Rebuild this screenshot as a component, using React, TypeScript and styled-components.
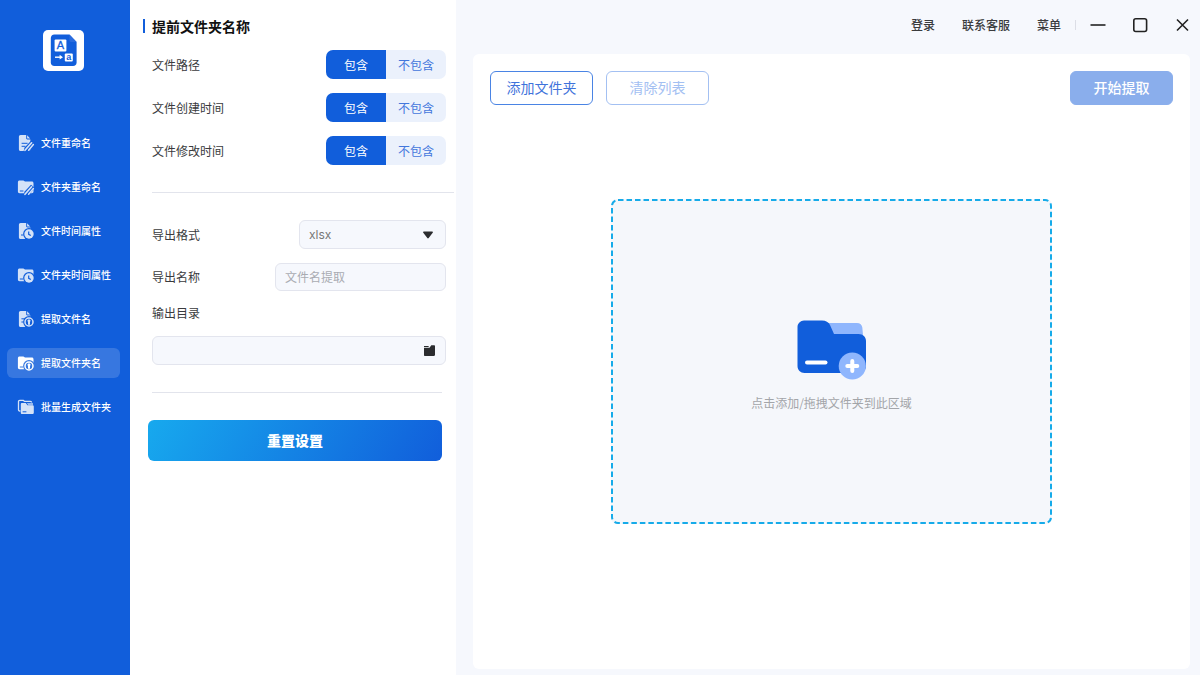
import React, { useState } from "react";
import styled, { createGlobalStyle } from "styled-components";

const blue = "#115edb";

const GlobalStyle = createGlobalStyle`
  *, *::before, *::after { box-sizing: border-box; }
  body {
    margin: 0;
    background: #f6f8fd;
    font-family: "Noto Sans CJK SC", "Noto Sans", sans-serif;
    font-size: 12px;
    line-height: 20px;
    color: #3a3b3d;
  }
  button, input, select { font: inherit; color: inherit; margin: 0; }
  button { cursor: pointer; }
`;

const Shell = styled.div`
  display: grid;
  grid-template-columns: 130px 326px minmax(0, 1fr);
  min-height: 100vh;
`;

/* ---------- sidebar ---------- */

const Sidebar = styled.aside`
  background: ${blue};
  display: flex;
  flex-direction: column;
  align-items: center;
  padding: 30px 10px 24px 7px;
`;

const Logo = styled.svg`
  width: 41px;
  height: 41px;
  display: block;
`;

const Nav = styled.nav`
  display: flex;
  flex-direction: column;
  gap: 14px;
  margin-top: 57px;
  width: 100%;
`;

const NavLink = styled.a<{ $active: boolean }>`
  display: flex;
  align-items: center;
  gap: 6px;
  height: 30px;
  padding-left: 10px;
  border-radius: 6px;
  font-size: 10px;
  font-weight: 500;
  white-space: nowrap;
  text-decoration: none;
  color: #fff;
  background: ${(p) => (p.$active ? "rgba(255, 255, 255, 0.16)" : "transparent")};

  svg {
    width: 18px;
    height: 18px;
    flex: none;
    opacity: ${(p) => (p.$active ? 1 : 0.82)};
  }
`;

/* ---------- settings panel ---------- */

const Panel = styled.section`
  background: #fff;
  padding: 16px 10px 24px 13px;
`;

const PanelTitle = styled.h1`
  display: flex;
  align-items: center;
  gap: 7px;
  margin: 0 0 14px;
  font-size: 14px;
  font-weight: 700;
  line-height: 20px;
  color: #111;

  &::before {
    content: "";
    width: 2px;
    height: 14px;
    background: ${blue};
  }
`;

const Fields = styled.div`
  display: flex;
  flex-direction: column;
  gap: 14px;
  padding-left: 9px;
`;

const Field = styled.div`
  display: flex;
  align-items: center;
  justify-content: space-between;
`;

const Divider = styled.hr<{ $end: number }>`
  height: 1px;
  border: 0;
  margin: 27px ${(p) => p.$end}px 27px 9px;
  background: #e2e4ec;
`;

const Segmented = styled.div`
  display: flex;
  width: 120px;
  height: 29px;
  border-radius: 7px;
  overflow: hidden;
  background: #ebf1fc;
`;

const Segment = styled.label`
  position: relative;
  flex: 1;
  display: flex;
  align-items: center;
  justify-content: center;
  color: #4377dc;
  cursor: pointer;

  &:has(input:checked) {
    background: ${blue};
    color: #fff;
  }

  input {
    position: absolute;
    inset: 0;
    opacity: 0;
  }
`;

const ControlBox = styled.div<{ $width?: number; $height: number }>`
  display: flex;
  align-items: center;
  width: ${(p) => (p.$width ? p.$width + "px" : "100%")};
  height: ${(p) => p.$height}px;
  border: 1px solid #e3e5ee;
  border-radius: 6px;
  background: #f6f8fd;
`;

const TextInput = styled.input`
  flex: 1;
  min-width: 0;
  height: 100%;
  padding: 0 9px 2px;
  border: 0;
  outline: 0;
  background: transparent;
  &::placeholder { color: #a9abb2; opacity: 1; }
`;

const SelectWrap = styled(ControlBox)`
  position: relative;
  svg {
    position: absolute;
    right: 12px;
    pointer-events: none;
  }
`;

const Select = styled.select`
  appearance: none;
  width: 100%;
  height: 100%;
  padding: 0 30px 0 9px;
  border: 0;
  outline: 0;
  background: transparent;
  color: #777;
  font-family: Inter, "Noto Sans CJK SC", sans-serif;
`;

const DirLabel = styled.label`
  display: block;
  padding: 12px 0 13px 9px;
`;

const DirRow = styled.div`
  padding-left: 9px;
`;

const BrowseButton = styled.button`
  display: flex;
  padding: 0;
  margin-right: 10px;
  border: 0;
  background: none;
`;

const ResetButton = styled.button`
  display: block;
  width: 294px;
  height: 41px;
  margin-left: 5px;
  padding: 0 0 2px;
  border: 0;
  border-radius: 6px;
  background: linear-gradient(120deg, #17a9ee, ${blue});
  color: #fff;
  font-size: 14px;
  font-weight: 900;
`;

/* ---------- main area ---------- */

const Main = styled.main`
  display: flex;
  flex-direction: column;
  padding: 0 10px 6px 17px;
`;

const TopBar = styled.header`
  display: flex;
  align-items: center;
  justify-content: flex-end;
  height: 50px;
  margin-bottom: 4px;
`;

const TopLinks = styled.nav`
  display: flex;
  gap: 27px;
  a {
    color: inherit;
    font-weight: 500;
    text-decoration: none;
  }
`;

const TopRule = styled.span`
  width: 1px;
  height: 10px;
  margin: 0 14px;
  background: #dcdee6;
`;

const WindowButtons = styled.div`
  display: flex;
  gap: 26px;
`;

const WindowButton = styled.button`
  display: flex;
  padding: 0;
  border: 0;
  background: none;
  svg { width: 16px; height: 16px; }
`;

const Card = styled.div`
  flex: 1;
  display: flex;
  flex-direction: column;
  padding: 17px;
  border-radius: 6px;
  background: #fff;
`;

const Toolbar = styled.div`
  display: flex;
  gap: 13px;
`;

const ToolButton = styled.button<{ $kind: "outline" | "muted" | "solid" }>`
  width: 103px;
  height: 34px;
  padding: 0 0 2px;
  border-radius: 6px;
  font-size: 14px;
  border: 1px solid
    ${(p) => ({ outline: "#4a84e4", muted: "#a3c0f2", solid: "#8aaeec" })[p.$kind]};
  background: ${(p) => (p.$kind === "solid" ? "#8aaeec" : "#fff")};
  color: ${(p) => ({ outline: "#3f73db", muted: "#a3c0f2", solid: "#fff" })[p.$kind]};
  font-weight: ${(p) => (p.$kind === "solid" ? 500 : 400)};
  margin-left: ${(p) => (p.$kind === "solid" ? "auto" : "0")};
`;

const DropZone = styled.button`
  position: relative;
  display: flex;
  flex-direction: column;
  align-items: center;
  justify-content: center;
  gap: 13px;
  align-self: center;
  width: 100%;
  max-width: 441px;
  height: 325px;
  margin-top: 94px;
  padding: 16px 0 6px;
  border: 0;
  border-radius: 6px;
  background: #f5f7fb;
  color: #a3a5a9;
`;

const DashedFrame = styled.svg`
  position: absolute;
  inset: 0;
  width: 100%;
  height: 100%;
  overflow: visible;

  rect {
    x: 1px;
    y: 1px;
    width: calc(100% - 2px);
    height: calc(100% - 2px);
    fill: none;
    stroke: #16abe9;
    stroke-width: 2px;
    stroke-dasharray: 5.5 3;
  }
`;

/* ---------- drawings ---------- */

const Clock = () => (
  <>
    <circle cx="12" cy="12" r="5.9" fill={blue} />
    <circle cx="12" cy="12" r="4.7" fill="#fff" />
    <path d="M11.7 9.4V12.3L13.8 13.5" fill="none" stroke={blue} strokeWidth="1.2" />
  </>
);

const Extract = ({ bg }: { bg: string }) => (
  <>
    <circle cx="12" cy="12" r="5.9" fill={bg} />
    <circle cx="12" cy="12" r="4" fill="none" stroke="#fff" strokeWidth="1.5" />
    <path d="M12 9L14.2 11.2H13V14.8H11V11.2H9.8Z" fill="#fff" />
  </>
);

const FileBody = () => (
  <>
    <path
      d="M3.6 1H9.2V4.2C9.2 4.9 9.6 5.4 10.3 5.4H13.4V15.2C13.4 16.2 12.7 17 11.7 17H3.6C2.6 17 1.9 16.2 1.9 15.2V2.8C1.9 1.8 2.6 1 3.600 1Z"
      fill="#fff"
    />
    <path d="M10.1 1.2L13.2 4.5H10.7C10.3 4.5 10.1 4.300 10.1 3.9Z" fill="#fff" />
  </>
);

const FolderBody = () => (
  <path
    d="M0.900 4.3C0.900 3.3 1.600 2.600 2.600 2.600H6.400L8 3.600H14.800C15.800 3.600 16.500 4.300 16.500 5.200V13.600C16.500 14.600 15.800 15.300 14.800 15.300H2.600C1.600 15.300 0.900 14.600 0.900 13.600Z"
    fill="#fff"
  />
);

const Pencil = () => (
  <>
    <path d="M6.600 17.400L7.400 13.800L14 6.800L17.600 9.800L12 17.400Z" fill={blue} />
    <path d="M8 16.300L14.600 8.800" stroke="#fff" strokeWidth="1.700" strokeLinecap="round" />
    <path d="M11.600 16.200L16.400 10.600" stroke="#fff" strokeWidth="1.500" strokeLinecap="round" />
  </>
);

type IconName =
  | "fileRename" | "folderRename" | "fileTime" | "folderTime"
  | "fileExtract" | "folderExtract" | "batch";

const NavIcon = ({ name }: { name: IconName }) => (
  <svg viewBox="0 0 18 18" aria-hidden="true">
    {name === "fileRename" && (
      <>
        <FileBody />
        <path d="M4.600 9.300H10.600M4.600 12.300H8.500" stroke={blue} strokeWidth="1" />
        <Pencil />
      </>
    )}
    {name === "folderRename" && (
      <>
        <FolderBody />
        <path d="M2.800 13H6.400" stroke={blue} strokeWidth="1" />
        <Pencil />
      </>
    )}
    {name === "fileTime" && (
      <>
        <FileBody />
        <path d="M4 13H6.500" stroke={blue} strokeWidth="1" />
        <Clock />
      </>
    )}
    {name === "folderTime" && (
      <>
        <FolderBody />
        <path d="M2.800 13H6.200" stroke={blue} strokeWidth="1" />
        <Clock />
      </>
    )}
    {name === "fileExtract" && (
      <>
        <FileBody />
        <path d="M4.400 8.800H8M4.400 12H6.500" stroke={blue} strokeWidth="1" />
        <Extract bg={blue} />
      </>
    )}
    {name === "folderExtract" && (
      <>
        <FolderBody />
        <path d="M2.800 13H6.200" stroke="#3778e0" strokeWidth="1" />
        <Extract bg="#3778e0" />
      </>
    )}
    {name === "batch" && (
      <>
        <path
          d="M3.400 13H2.600C1.900 13 1.500 12.500 1.500 11.800V3.600C1.500 2.800 2 2.400 2.700 2.400H6.400L7.600 3.400H13.400C14.100 3.400 14.600 3.800 14.600 4.500"
          fill="none"
          stroke="#fff"
          strokeWidth="1.300"
        />
        <path
          d="M3.800 6.400C3.800 5.600 4.300 5.100 5 5.100H8.800L10.400 7.200H15.500C16.200 7.200 16.800 7.700 16.800 8.500V14.800C16.800 15.600 16.200 16.100 15.500 16.100H5C4.300 16.100 3.800 15.600 3.800 14.800Z"
          fill="#fff"
        />
        <path d="M9.800 5.100H16V7.200H11.200Z" fill="#fff" opacity="0.700" />
        <path d="M5.600 13.800H9.400" stroke={blue} strokeWidth="1" />
      </>
    )}
  </svg>
);

const LogoMark = () => (
  <Logo viewBox="0 0 41 41" aria-hidden="true">
    <rect width="41" height="41" rx="5" fill="#fff" />
    <path
      d="M11.4 4.5H26.4L33.6 12V32.4C33.6 34.5 32.2 36 30 36H11.4C9.2 36 7.8 34.5 7.8 32.4V8.1C7.8 6 9.2 4.5 11.4 4.5Z"
      fill={blue}
    />
    <path d="M26.4 4.5L33.6 12H27.8C27 12 26.4 11.4 26.4 10.6Z" fill="#2a6cde" />
    <rect x="11.600" y="9.600" width="11.800" height="11.800" rx="1" fill="#fff" />
    <text x="17.500" y="19.200" textAnchor="middle" fontFamily="Liberation Sans, sans-serif" fontSize="11" fill={blue} stroke={blue} strokeWidth="0.300">A</text>
    <rect x="21.800" y="23.400" width="8" height="8" rx="1" fill="#fff" />
    <text x="25.800" y="30" textAnchor="middle" fontFamily="Liberation Sans, sans-serif" fontSize="9" fontWeight="700" fill={blue}>a</text>
    <path d="M12 27.200H17.400" stroke="#fff" strokeWidth="1.400" />
    <path d="M16.600 24.800L20 27.200L16.600 29.600Z" fill="#fff" />
  </Logo>
);

const AddFolderIcon = () => (
  <svg width="70" height="60" viewBox="0 0 70 60" aria-hidden="true">
    <path d="M28 3H60C63 3 65 5 65.300 7.500L66.500 20H28Z" fill="#8fb6fd" />
    <path
      d="M7 0.500H25C29 0.500 31.500 2 33 5L37 14H61.500C66 14 69 17 69 21V46C69 50 66 53 61.500 53H7.500C3.500 53 0.500 50 0.500 46V7C0.500 3.500 3.500 0.500 7 0.500Z"
      fill={blue}
    />
    <rect x="8" y="40.500" width="22.500" height="4" rx="2" fill="#fff" />
    <circle cx="55.300" cy="46" r="13.600" fill="#8fb6fd" />
    <path d="M55.300 41V51M50.300 46H60.300" stroke="#fff" strokeWidth="4" strokeLinecap="round" />
  </svg>
);

/* ---------- page ---------- */

const navItems: { name: IconName; label: string }[] = [
  { name: "fileRename", label: "文件重命名" },
  { name: "folderRename", label: "文件夹重命名" },
  { name: "fileTime", label: "文件时间属性" },
  { name: "folderTime", label: "文件夹时间属性" },
  { name: "fileExtract", label: "提取文件名" },
  { name: "folderExtract", label: "提取文件夹名" },
  { name: "batch", label: "批量生成文件夹" },
];

const IncludeField = ({ id, label }: { id: string; label: string }) => {
  const [included, setIncluded] = useState(true);
  return (
    <Field role="radiogroup" aria-labelledby={id}>
      <span id={id}>{label}</span>
      <Segmented>
        <Segment>
          <input type="radio" name={id + "-opt"} checked={included} onChange={() => setIncluded(true)} />
          包含
        </Segment>
        <Segment>
          <input type="radio" name={id + "-opt"} checked={!included} onChange={() => setIncluded(false)} />
          不包含
        </Segment>
      </Segmented>
    </Field>
  );
};

export default function App() {
  return (
    <>
      <GlobalStyle />
      <Shell>
        <Sidebar>
          <LogoMark />
          <Nav>
            {navItems.map((item) => (
              <NavLink key={item.name} href="#" $active={item.name === "folderExtract"}>
                <NavIcon name={item.name} />
                {item.label}
              </NavLink>
            ))}
          </Nav>
        </Sidebar>

        <Panel>
          <PanelTitle>提前文件夹名称</PanelTitle>
          <Fields>
            <IncludeField id="path" label="文件路径" />
            <IncludeField id="created" label="文件创建时间" />
            <IncludeField id="modified" label="文件修改时间" />
          </Fields>
          <Divider $end={-8} />
          <Fields>
            <Field>
              <label htmlFor="format">导出格式</label>
              <SelectWrap $width={147} $height={29}>
                <Select id="format" defaultValue="xlsx">
                  <option value="xlsx">xlsx</option>
                </Select>
                <svg width="10" height="8" viewBox="0 0 10 8" aria-hidden="true">
                  <path d="M0.800 0.500H9.200C9.900 0.500 10.200 1.200 9.700 1.700L5.700 7C5.300 7.500 4.700 7.500 4.300 7L0.300 1.700C-0.200 1.200 0.100 0.500 0.800 0.500Z" fill="#2b2c2f" />
                </svg>
              </SelectWrap>
            </Field>
            <Field>
              <label htmlFor="name">导出名称</label>
              <ControlBox $width={171} $height={28}>
                <TextInput id="name" type="text" placeholder="文件名提取" />
              </ControlBox>
            </Field>
          </Fields>
          <DirLabel htmlFor="dir">输出目录</DirLabel>
          <DirRow>
            <ControlBox $height={29}>
              <TextInput id="dir" type="text" />
              <BrowseButton type="button" aria-label="选择目录">
                <svg width="11" height="11" viewBox="0 0 11 11" aria-hidden="true">
                  <path d="M0 1H4.300L5 2H0ZM0 2.700H5.500L7.300 0.200H10C10.600 0.200 11 0.600 11 1.200V9.800C11 10.500 10.600 11 10 11H1C0.400 11 0 10.600 0 10Z" fill="#2b2c2f" />
                </svg>
              </BrowseButton>
            </ControlBox>
          </DirRow>
          <Divider $end={4} />
          <ResetButton type="button">重置设置</ResetButton>
        </Panel>

        <Main>
          <TopBar>
            <TopLinks>
              <a href="#">登录</a>
              <a href="#">联系客服</a>
              <a href="#">菜单</a>
            </TopLinks>
            <TopRule />
            <WindowButtons>
              <WindowButton type="button" aria-label="最小化">
                <svg viewBox="0 0 16 16"><path d="M0.500 8H15.500" stroke="#222" strokeWidth="1.600" /></svg>
              </WindowButton>
              <WindowButton type="button" aria-label="最大化">
                <svg viewBox="0 0 16 16"><rect x="1.800" y="1.700" width="12.800" height="12.800" rx="2" fill="none" stroke="#222" strokeWidth="1.600" /></svg>
              </WindowButton>
              <WindowButton type="button" aria-label="关闭">
                <svg viewBox="0 0 16 16"><path d="M3 2.500L14 13.500M14 2.500L3 13.500" stroke="#222" strokeWidth="1.600" /></svg>
              </WindowButton>
            </WindowButtons>
          </TopBar>
          <Card>
            <Toolbar>
              <ToolButton type="button" $kind="outline">添加文件夹</ToolButton>
              <ToolButton type="button" $kind="muted">清除列表</ToolButton>
              <ToolButton type="button" $kind="solid">开始提取</ToolButton>
            </Toolbar>
            <DropZone type="button">
              <DashedFrame aria-hidden="true"><rect rx="6" /></DashedFrame>
              <AddFolderIcon />
              <span>点击添加/拖拽文件夹到此区域</span>
            </DropZone>
          </Card>
        </Main>
      </Shell>
    </>
  );
}
